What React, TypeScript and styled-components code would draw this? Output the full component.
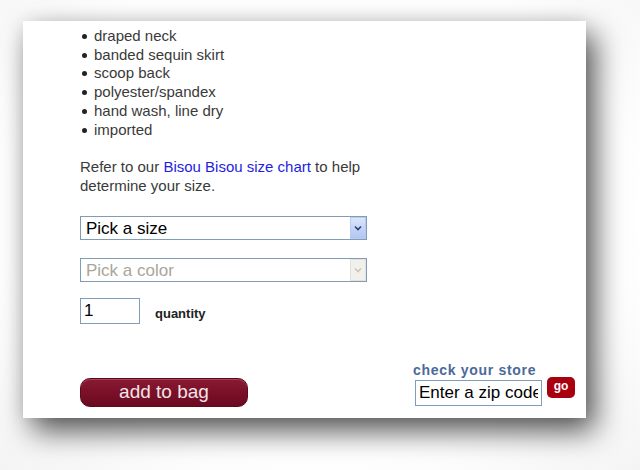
import React from "react";
import styled, { createGlobalStyle } from "styled-components";

const GlobalStyle = createGlobalStyle`
  html, body {
    margin: 0;
    padding: 0;
    background: #ffffff;
  }
  body {
    font-family: "Liberation Sans", Arial, sans-serif;
  }
`;

const Page = styled.div`
  width: 640px;
  height: 470px;
  overflow: hidden;
  padding: 21px 0 0 23px;
  box-sizing: border-box;
  background: radial-gradient(ellipse at 50% 45%, #ffffff 70%, #f4f4f4 100%);
`;

const Panel = styled.div`
  width: 563px;
  height: 397px;
  background: #fff;
  box-sizing: border-box;
  padding: 6px 11px 10px 57px;
  display: flex;
  flex-direction: column;
  box-shadow: 9px 13px 28px rgba(0, 0, 0, 0.68), -2px -2px 16px rgba(0, 0, 0, 0.06);
`;

const Features = styled.ul`
  list-style: none;
  margin: 0;
  padding: 0;
  font-size: 15px;
  line-height: 18.7px;
  color: #3a3a3a;
`;

const Feature = styled.li`
  position: relative;
  padding-left: 14px;
  &::before {
    content: "";
    position: absolute;
    left: 2px;
    top: 7px;
    width: 5px;
    height: 5px;
    border-radius: 50%;
    background: #222;
  }
`;

const Note = styled.p`
  margin: 18px 0 0;
  width: 300px;
  font-size: 15px;
  line-height: 19px;
  color: #3a3a3a;
`;

const Link = styled.a`
  color: #1e1ee0;
  text-decoration: none;
`;

const SelectWrap = styled.div<{ $top: number }>`
  position: relative;
  width: 287px;
  height: 24px;
  margin-top: ${(p) => p.$top}px;
`;

const Select = styled.select<{ $disabled?: boolean }>`
  appearance: none;
  width: 100%;
  height: 100%;
  box-sizing: border-box;
  border: 1px solid #7f9db9;
  background: #fff;
  font-family: "Liberation Sans", Arial, sans-serif;
  font-size: 17px;
  padding: 0 0 0 5px;
  color: ${(p) => (p.$disabled ? "#a9a59a" : "#000")};
  opacity: 1;
  outline: none;
`;

const ArrowBox = styled.span<{ $disabled?: boolean }>`
  position: absolute;
  right: 1px;
  top: 1px;
  bottom: 1px;
  width: 16px;
  display: flex;
  align-items: center;
  justify-content: center;
  box-sizing: border-box;
  border: 1px solid ${(p) => (p.$disabled ? "#e4e2da" : "#b9cbf0")};
  background: ${(p) =>
    p.$disabled
      ? "#f1f0ea"
      : "linear-gradient(180deg, #dce6fb 0%, #c3d3f6 55%, #b3c6f0 100%)"};
  pointer-events: none;
`;

const QtyRow = styled.div`
  display: flex;
  align-items: center;
  gap: 15px;
  margin-top: 16px;
`;

const TextInput = styled.input<{ $w: number }>`
  width: ${(p) => p.$w}px;
  height: 26px;
  box-sizing: border-box;
  border: 1px solid #7f9db9;
  font-family: "Liberation Sans", Arial, sans-serif;
  font-size: 17px;
  color: #000;
  padding: 0 3px;
  outline: none;
`;

const QtyLabel = styled.span`
  font-size: 13px;
  font-weight: bold;
  color: #222;
  padding-top: 5px;
`;

const BottomRow = styled.div`
  margin-top: auto;
  display: flex;
  justify-content: space-between;
  align-items: flex-end;
`;

const BagButton = styled.button`
  width: 168px;
  height: 29px;
  margin-bottom: 1px;
  border-radius: 10px;
  border: 1px solid #5e0a1e;
  background: linear-gradient(180deg, #8a1a32 0%, #7b1129 45%, #6b0a21 100%);
  box-shadow: inset 0 1px 0 rgba(255, 255, 255, 0.18);
  color: #f3e4e8;
  font-family: "Liberation Sans", Arial, sans-serif;
  font-size: 19px;
  padding: 0 0 2px;
`;

const Store = styled.div`
  display: flex;
  flex-direction: column;
  align-items: flex-start;
  margin-bottom: 2px;
`;

const StoreTitle = styled.div`
  font-size: 14px;
  font-weight: bold;
  letter-spacing: 0.7px;
  color: #4b6a9b;
  margin: 0 0 2px -2px;
`;

const ZipRow = styled.div`
  display: flex;
  align-items: flex-start;
  gap: 5px;
`;

const GoButton = styled.button`
  width: 28px;
  height: 21px;
  margin-top: -3px;
  border-radius: 5px;
  border: none;
  background: #a8000e;
  color: #fff;
  font-family: "Liberation Sans", Arial, sans-serif;
  font-weight: bold;
  font-size: 12px;
  padding: 0 0 4px;
`;

const Chevron = ({ color }: { color: string }) => (
  <svg width="8" height="6" viewBox="0 0 8 6">
    <path d="M1 1.5 L4 4.5 L7 1.5" fill="none" stroke={color} strokeWidth="1.6" />
  </svg>
);

const features = [
  "draped neck",
  "banded sequin skirt",
  "scoop back",
  "polyester/spandex",
  "hand wash, line dry",
  "imported",
];

export default function App() {
  return (
    <>
      <GlobalStyle />
      <Page>
        <Panel>
          <Features>
            {features.map((f) => (
              <Feature key={f}>{f}</Feature>
            ))}
          </Features>
          <Note>
            Refer to our <Link href="#">Bisou Bisou size chart</Link> to help
            determine your size.
          </Note>
          <SelectWrap $top={21}>
            <Select defaultValue="size">
              <option value="size">Pick a size</option>
            </Select>
            <ArrowBox>
              <Chevron color="#2a3f78" />
            </ArrowBox>
          </SelectWrap>
          <SelectWrap $top={18}>
            <Select $disabled disabled defaultValue="color">
              <option value="color">Pick a color</option>
            </Select>
            <ArrowBox $disabled>
              <Chevron color="#c9c6bb" />
            </ArrowBox>
          </SelectWrap>
          <QtyRow>
            <TextInput $w={60} defaultValue="1" />
            <QtyLabel>quantity</QtyLabel>
          </QtyRow>
          <BottomRow>
            <BagButton>add to bag</BagButton>
            <Store>
              <StoreTitle>check your store</StoreTitle>
              <ZipRow>
                <TextInput $w={127} defaultValue="Enter a zip code" />
                <GoButton>go</GoButton>
              </ZipRow>
            </Store>
          </BottomRow>
        </Panel>
      </Page>
    </>
  );
}
